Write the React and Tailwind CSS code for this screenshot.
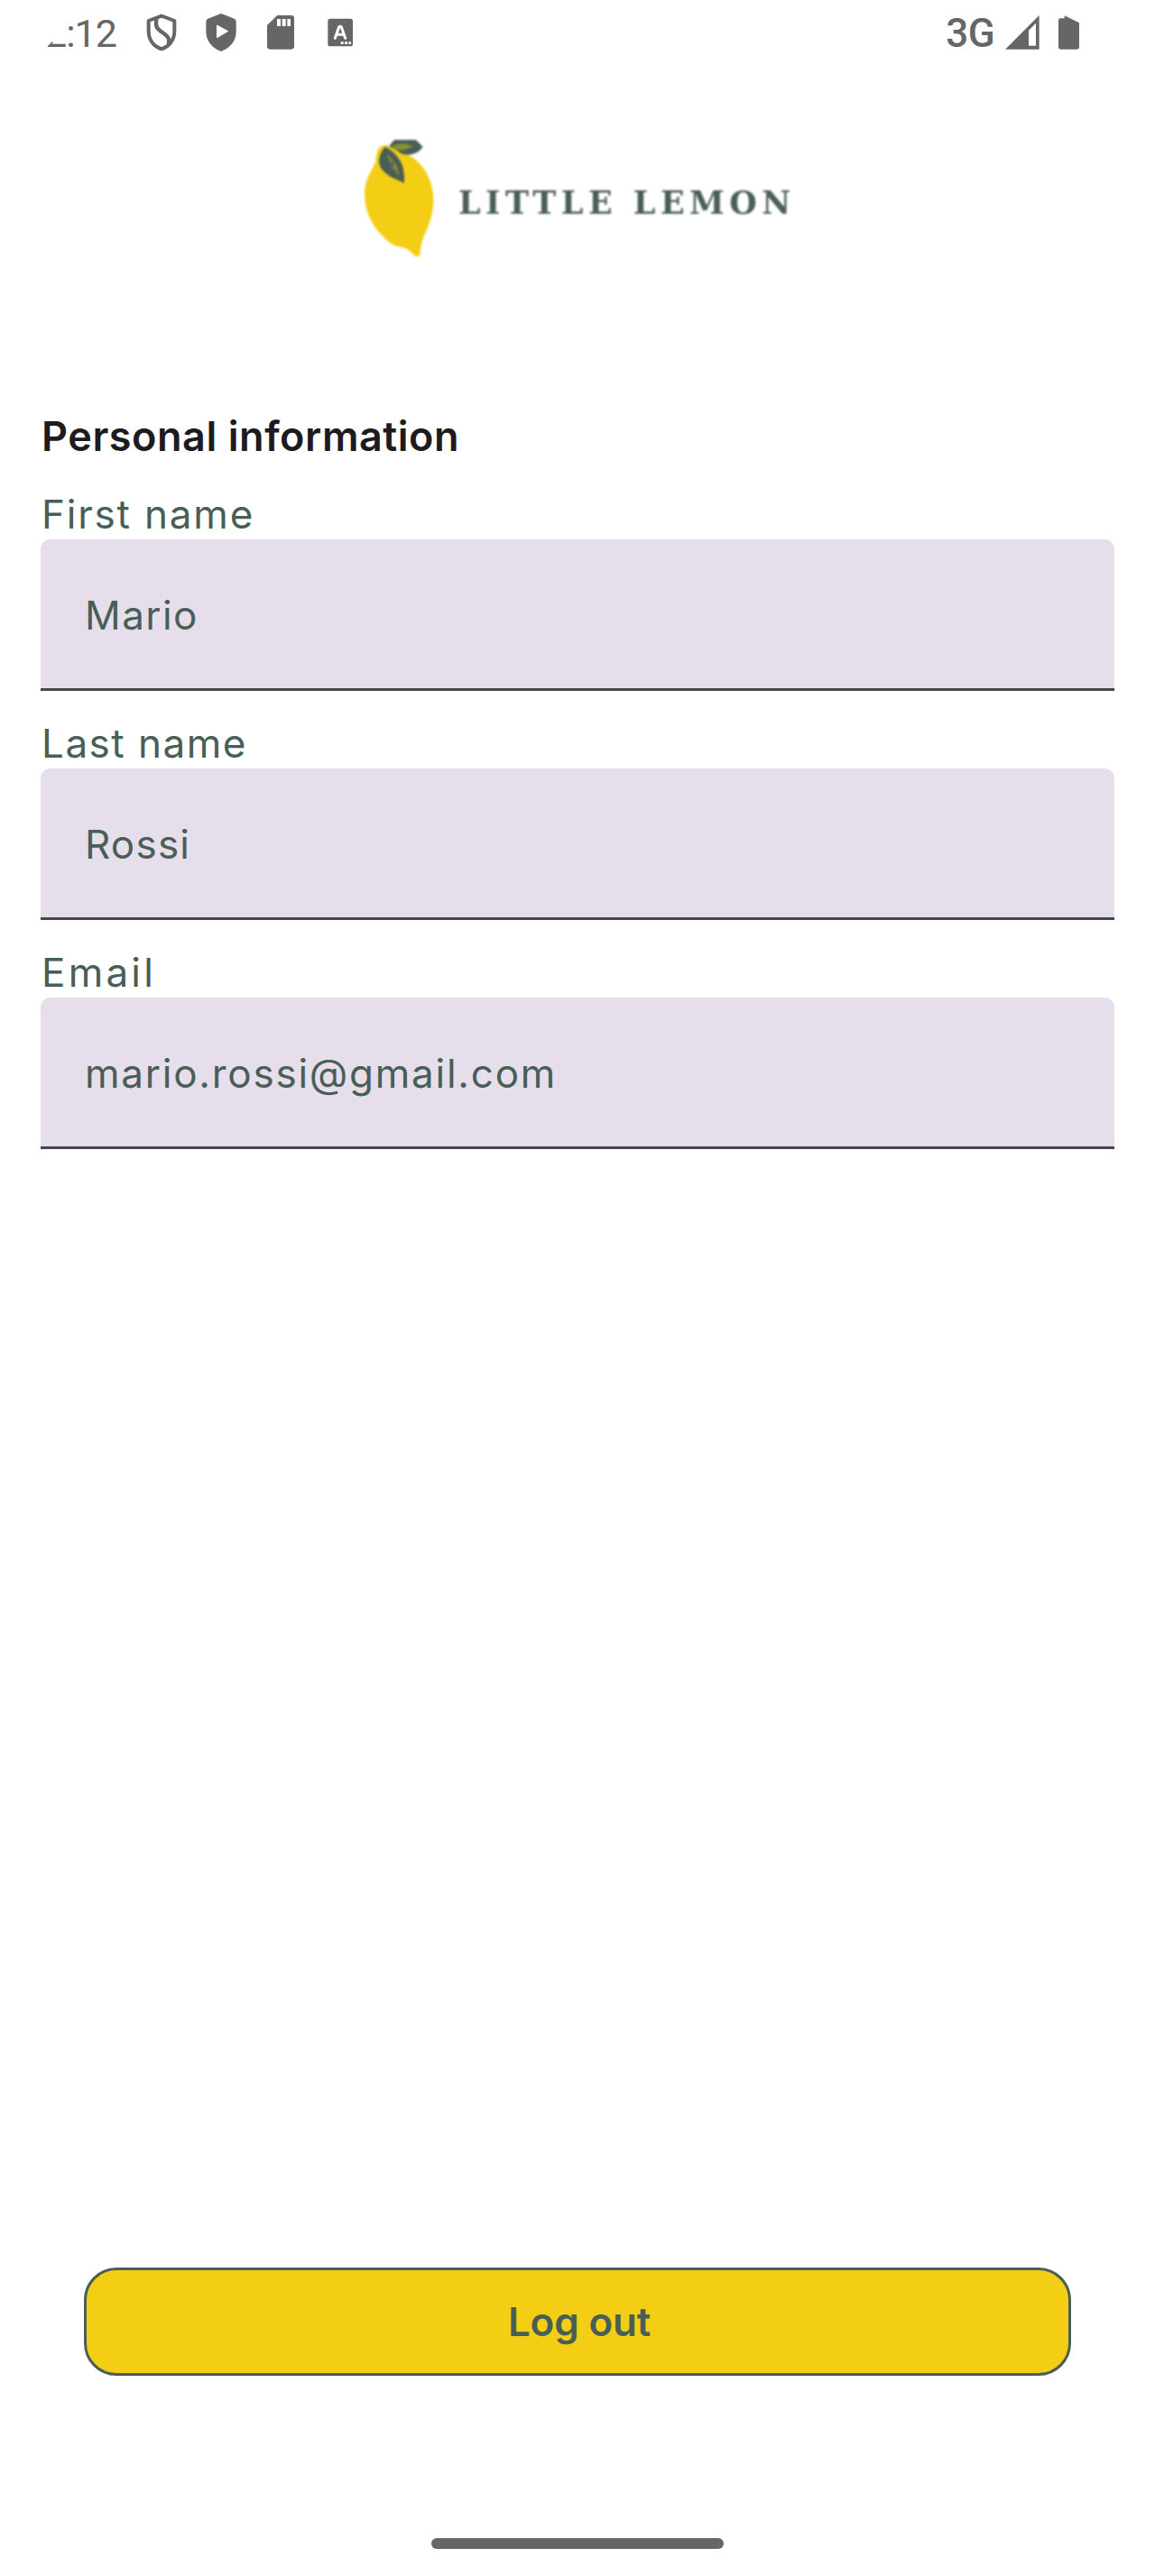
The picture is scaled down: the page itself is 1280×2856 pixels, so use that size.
function StatusIcons() {
  return (
    <svg className="block h-20 w-[400px]" viewBox="0 0 1200 240" fill="#666666">
      <path d="M447 53 L490 69 V103 C490 133 473 154 447 163 C421 154 404 133 404 103 V69 Z" fill="none" stroke="#666666" strokeWidth="12" strokeLinejoin="round" />
      <path d="M431 60 C425 88 432 96 450 108 C469 121 476 130 470 148" fill="none" stroke="#666666" strokeWidth="13" />
      <path d="M645 45 L689 62 Q695 65 695 71 V105 C695 136 675 160 645 171 C615 160 595 136 595 105 V71 Q595 65 601 62 Z" />
      <path d="M630 86 Q630 82 634 84 L667 102 Q671 104 667 106 L634 125 Q630 127 630 123 Z" fill="#fff" />
      <path d="M832 51 H878 Q888 51 888 61 V154 Q888 164 878 164 H808 Q798 164 798 154 V84 Z" />
      <path d="M831 63 H843 V87 H831 Z M848 63 H860 V87 H848 Z M865 63 H876 V87 H865 Z" fill="#fff" />
      <rect x="1000" y="62" width="83" height="92" rx="8" />
      <path d="M1024 127 L1037 90 Q1041 85 1045 90 L1058 127 M1030 115 H1052" fill="none" stroke="#fff" strokeWidth="9" strokeLinecap="round" />
      <path d="M1043 139 h9 v8 h-9 z M1056 139 h9 v8 h-9 z M1069 139 h8 v8 h-8 z" fill="#fff" />
    </svg>
  );
}

function SignalIcons() {
  return (
    <svg className="block h-20 w-[98px]" viewBox="216 0 294 240" fill="#666666">
      <path fillRule="evenodd" d="M252 164 L365 51 V164 Z M330 101 V152 H354 V77 Z" />
      <path d="M429 68 Q429 61 436 61 H449 V52 L498 76 V157 Q498 164 491 164 H436 Q429 164 429 157 Z" />
    </svg>
  );
}

function StatusBar() {
  return (
    <header className="flex h-20 w-full items-start font-['Roboto',sans-serif] text-[#666666]">
      <div className="relative ml-[50px] h-20 w-0">
        <span className="block w-[90px] whitespace-nowrap pt-[12px] text-[43px] leading-[50px] tracking-[-1px] [clip-path:polygon(0_100%,0_54px,8px_46px,9px_48px,22px_48px,22px_0,100%_0,100%_100%)]">
          2:12
        </span>
      </div>
      <div className="-ml-5">
        <StatusIcons />
      </div>
      <div className="ml-auto flex pr-20">
        <span className="pt-[12px] text-[44px] font-medium leading-[50px] tracking-[-0.6px]">3G</span>
        <SignalIcons />
      </div>
    </header>
  );
}

function Lemon() {
  return (
    <svg className="block h-[150px] w-[110px] blur-[0.8px]" viewBox="0 0 330 450">
      <clipPath id="lemon-frame">
        <rect x="0" y="45" width="330" height="387" />
      </clipPath>
      <g clipPath="url(#lemon-frame)">
        <path
          d="M88 76 Q98 60 120 64 C150 72 168 84 190 96 C238 124 272 180 271 248 C270 300 252 336 241 362 C230 386 227 414 225 445 L214 440 C200 416 182 405 162 401 C138 397 124 388 105 368 C72 336 42 290 42 224 C42 174 68 146 78 120 C82 104 80 88 88 76 Z"
          fill="#f4ce14"
        />
        <path d="M124 68 C136 42 158 34 184 34 C212 38 222 56 236 68 C222 88 202 96 176 94 C156 90 148 76 124 68 Z" fill="#495e57" />
        <path d="M130 68 C150 56 178 54 204 67 C184 78 164 82 148 78 Z" fill="#8b902f" />
        <path d="M110 68 C136 80 160 104 169 134 C175 156 174 172 174 190 C152 176 132 174 112 156 C94 140 86 124 92 102 C96 86 102 78 110 68 Z" fill="#495e57" />
        <path d="M117 94 C134 108 154 136 156 162 C140 150 124 122 117 94 Z" fill="#b6aa2a" />
        <path d="M122 104 L151 154 M139 113 L136 132 M122 121 L137 132" stroke="#495e57" strokeWidth="4" fill="none" />
      </g>
    </svg>
  );
}

function Logo() {
  return (
    <div className="flex h-[150px] pl-[390px]">
      <Lemon />
      <span className="whitespace-nowrap pl-[8px] pt-[64px] font-['DejaVu_Serif',serif] text-[35px] font-bold leading-[41px] tracking-[5.5px] text-[#495e57] blur-[0.8px]">
        LITTLE LEMON
      </span>
    </div>
  );
}

function Field({ label, value, labelClass, valueClass }) {
  return (
    <div className="text-[#495e57]">
      <div className={`h-[55px] pl-[1px] leading-[54px] ${labelClass}`}>{label}</div>
      <div className="flex h-[168px] items-center rounded-t-[11px] border-b-[3px] border-[#49454f] bg-[#e6dfeb] pl-[49px] pt-[3px]">
        <span className={`leading-[54px] ${valueClass}`}>{value}</span>
      </div>
    </div>
  );
}

export default function App() {
  return (
    <div className="flex h-[2856px] w-[1280px] flex-col overflow-hidden bg-white font-['Inter',sans-serif] text-[44px]">
      <StatusBar />
      <div className="pt-[60px]">
        <Logo />
      </div>
      <main className="flex grow flex-col px-[45px] pt-[167px]">
        <h1 className="mb-[32px] pl-[1px] text-[45px] font-semibold leading-[54px] tracking-[0.55px] text-[#1d1b20]">
          Personal information
        </h1>
        <div className="flex flex-col gap-[31px]">
          <Field label="First name" value="Mario" labelClass="tracking-[1.8px]" valueClass="tracking-[1.4px]" />
          <Field label="Last name" value="Rossi" labelClass="tracking-[1.5px]" valueClass="tracking-[1.2px]" />
          <Field label="Email" value="mario.rossi@gmail.com" labelClass="tracking-[3.2px]" valueClass="tracking-[1.75px]" />
        </div>
        <button className="mx-12 mb-[180px] mt-auto flex h-[120px] items-center justify-center rounded-[36px] border-[3px] border-[#495e57] bg-[#f4ce14] pl-[4px] font-semibold leading-[54px] tracking-[-0.2px] text-[#495e57]">
          Log out
        </button>
      </main>
      <div className="mb-[30px] ml-[478px] h-3 w-[324px] shrink-0 rounded-full bg-[#666666]" />
    </div>
  );
}
